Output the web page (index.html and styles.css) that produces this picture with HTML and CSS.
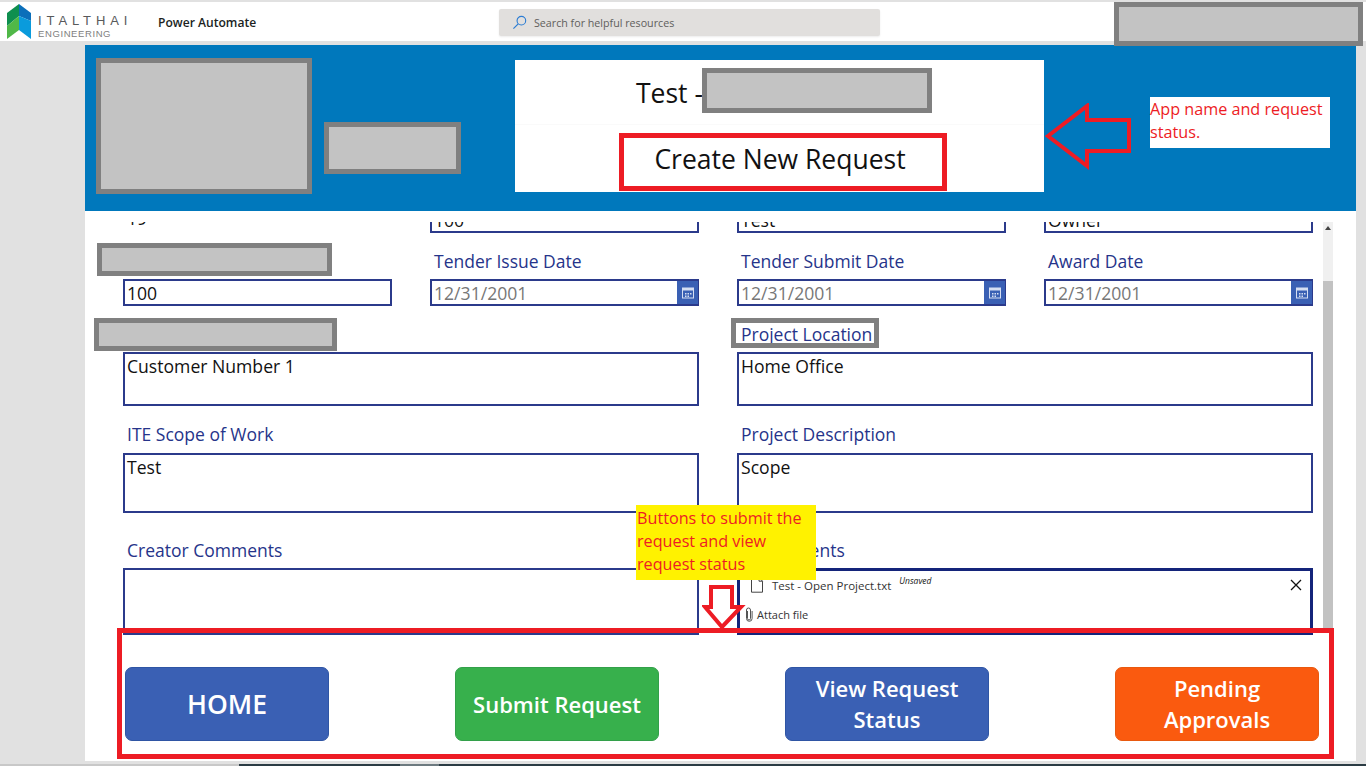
FILE: index.html
```html
<!DOCTYPE html>
<html lang="en">

<head>
    <meta charset="UTF-8">
    <title>Power Automate</title>
    <link rel="stylesheet" href="styles.css">
</head>

<body>
    <div class="top-bar">
        <div class="brand">
            <svg class="brand-mark" viewBox="0 0 24 36" width="24" height="36">
                <polygon points="12,0 0,9 0,22 12,12" fill="#0f8f4f"/>
                <polygon points="12,0 24,9 24,17 12,12" fill="#0b6fba"/>
                <polygon points="0,22 12,12 12,26 0,35" fill="#50b848"/>
                <polygon points="12,12 24,17 24,35 12,26" fill="#0a9bdc"/>
            </svg>
            <div class="brand-words">
                <div class="brand-name">ITALTHAI</div>
                <div class="brand-sub">ENGINEERING</div>
            </div>
        </div>
        <div class="product">Power Automate</div>
        <div class="search">
            <svg viewBox="0 0 16 16" width="15" height="15">
                <circle cx="10" cy="6" r="4.6" fill="none" stroke="#2b7cd3" stroke-width="1.2"/>
                <line x1="6.6" y1="9.4" x2="1.5" y2="14.5" stroke="#2b7cd3" stroke-width="1.3"/>
            </svg>
            <span>Search for helpful resources</span>
        </div>
    </div>

    <div class="canvas">
        <div class="app-header">
            <div class="app-title">
                <div class="app-name">Test -</div>
                <div class="app-status">Create New Request</div>
            </div>
        </div>

        <div class="form-area">
            <div class="form-scroll">
                <div class="form-inner">
                    <div class="form-row">
                        <div class="plain-value">19</div>
                        <div class="input">100</div>
                        <div class="input">Test</div>
                        <div class="input">Owner</div>
                    </div>

                    <div class="form-row row-dates">
                        <div class="field">
                            <div class="label"></div>
                            <div class="input">100</div>
                        </div>
                        <div class="field">
                            <div class="label">Tender Issue Date</div>
                            <div class="input date">
                                <span>12/31/2001</span>
                                <span class="date-btn">
                                    <svg viewBox="0 0 12 12" width="12" height="12">
                                        <rect x="0.5" y="1" width="11" height="10" fill="none" stroke="#d5def2"/>
                                        <rect x="0.5" y="1" width="11" height="2.5" fill="#d5def2"/>
                                        <path d="M3 6h1.5v1.5H3zM5.5 6H7v1.5H5.5zM8 6h1.5v1.5H8zM3 8.5h1.5V10H3zM5.5 8.5H7V10H5.5z" fill="#d5def2"/>
                                    </svg>
                                </span>
                            </div>
                        </div>
                        <div class="field">
                            <div class="label">Tender Submit Date</div>
                            <div class="input date">
                                <span>12/31/2001</span>
                                <span class="date-btn">
                                    <svg viewBox="0 0 12 12" width="12" height="12">
                                        <rect x="0.5" y="1" width="11" height="10" fill="none" stroke="#d5def2"/>
                                        <rect x="0.5" y="1" width="11" height="2.5" fill="#d5def2"/>
                                        <path d="M3 6h1.5v1.5H3zM5.5 6H7v1.5H5.5zM8 6h1.5v1.5H8zM3 8.5h1.5V10H3zM5.5 8.5H7V10H5.5z" fill="#d5def2"/>
                                    </svg>
                                </span>
                            </div>
                        </div>
                        <div class="field">
                            <div class="label">Award Date</div>
                            <div class="input date">
                                <span>12/31/2001</span>
                                <span class="date-btn">
                                    <svg viewBox="0 0 12 12" width="12" height="12">
                                        <rect x="0.5" y="1" width="11" height="10" fill="none" stroke="#d5def2"/>
                                        <rect x="0.5" y="1" width="11" height="2.5" fill="#d5def2"/>
                                        <path d="M3 6h1.5v1.5H3zM5.5 6H7v1.5H5.5zM8 6h1.5v1.5H8zM3 8.5h1.5V10H3zM5.5 8.5H7V10H5.5z" fill="#d5def2"/>
                                    </svg>
                                </span>
                            </div>
                        </div>
                    </div>

                    <div class="form-row row-two row-location">
                        <div class="field">
                            <div class="label"></div>
                            <div class="input area">Customer Number 1</div>
                        </div>
                        <div class="field">
                            <div class="label">Project Location</div>
                            <div class="input area">Home Office</div>
                        </div>
                    </div>

                    <div class="form-row row-two row-scope">
                        <div class="field">
                            <div class="label">ITE Scope of Work</div>
                            <div class="input area tall">Test</div>
                        </div>
                        <div class="field">
                            <div class="label">Project Description</div>
                            <div class="input area tall">Scope</div>
                        </div>
                    </div>

                    <div class="form-row row-two row-comments">
                        <div class="field">
                            <div class="label">Creator Comments</div>
                            <div class="input area taller"></div>
                        </div>
                        <div class="field">
                            <div class="label">Attachments</div>
                            <div class="attach-box">
                                <div class="attach-item">
                                    <svg viewBox="0 0 14 16" width="14" height="16">
                                        <path d="M1.5 .7h7.5l3.5 3.5v11h-11zM9 .7v3.5h3.5" fill="none" stroke="#444" stroke-width="1"/>
                                    </svg>
                                    <span class="attach-name">Test - Open Project.txt</span>
                                    <span class="attach-state">Unsaved</span>
                                    <svg class="attach-close" viewBox="0 0 12 12" width="12" height="12">
                                        <path d="M1 1l10 10M11 1L1 11" stroke="#111" stroke-width="1.3"/>
                                    </svg>
                                </div>
                                <div class="attach-add">
                                    <svg viewBox="0 0 8 15" width="8" height="15">
                                        <path d="M2.5 4v7.5a1.5 1.5 0 0 0 3 0V3a2 2 0 0 0-4 0v8.5a2.8 2.8 0 0 0 5.6 0V4" fill="none" stroke="#555" stroke-width="1"/>
                                    </svg>
                                    <span>Attach file</span>
                                </div>
                            </div>
                        </div>
                    </div>
                </div>
            </div>
            <div class="scrollbar">
                <div class="scroll-track"><span class="scroll-up"></span></div>
                <div class="scroll-thumb"></div>
            </div>
        </div>

        <div class="actions">
            <div class="btn btn-home">HOME</div>
            <div class="btn btn-green">Submit Request</div>
            <div class="btn">View Request Status</div>
            <div class="btn btn-orange">Pending Approvals</div>
        </div>
    </div>

    <div class="bottom-strip">
        <div class="strip-light"></div>
        <div class="strip-dark"><span class="strip-thumb"></span></div>
    </div>

    <!-- redactions and notes drawn on top of the screenshot -->
    <div class="mask mask-account"></div>
    <div class="mask mask-logo"></div>
    <div class="mask mask-logo-small"></div>
    <div class="mask mask-app"></div>
    <div class="mask mask-label-one"></div>
    <div class="mask mask-label-two"></div>
    <div class="mark-location"></div>

    <div class="red-box red-status"></div>
    <div class="red-box red-actions"></div>

    <div class="note note-app">App name and request status.</div>
    <div class="note note-buttons">Buttons to submit the request and view request status</div>

    <svg class="arrow arrow-left" viewBox="0 0 90 68" width="90" height="68">
        <polygon points="3,33 42,3 42,17 84,17 84,48 42,48 42,63" fill="none" stroke="#ed1c24" stroke-width="4"/>
    </svg>
    <svg class="arrow arrow-down" viewBox="0 0 44 46" width="44" height="46">
        <polygon points="9,2 30,2 30,22 39,22 20,42 3,22 9,22" fill="none" stroke="#ed1c24" stroke-width="4"/>
    </svg>
</body>

</html>
```

FILE: styles.css
```css
* {
    box-sizing: border-box;
}

html,
body {
    height: 766px;
    overflow: hidden;
}

body {
    margin: 0;
    position: relative;
    background-color: #e1e1e1;
    font-family: "Open Sans", "Noto Sans", sans-serif;
    color: #111;
}

/* top bar */
.top-bar {
    display: flex;
    align-items: center;
    height: 41px;
    border-top: 2px solid #e1e1e1;
    background-color: white;
}

.brand {
    display: flex;
    align-items: center;
    gap: 7px;
    width: 158px;
    padding-left: 7px;
}

.brand-mark {
    flex: none;
}

.brand-words {
    padding-top: 11px;
    font-family: "Liberation Sans", sans-serif;
}

.brand-name {
    font-size: 13px;
    line-height: 14px;
    letter-spacing: 4.9px;
    color: #58595b;
    white-space: nowrap;
}

.brand-sub {
    font-size: 9.5px;
    line-height: 12px;
    letter-spacing: .6px;
    color: #808080;
    white-space: nowrap;
}

.product {
    width: 341px;
    margin-top: 1px;
    font-size: 12.1px;
    font-weight: 600;
    color: #201f1e;
}

.search {
    display: flex;
    align-items: center;
    gap: 7px;
    width: 381px;
    height: 27px;
    margin-top: 2px;
    padding-left: 13px;
    border-radius: 2px;
    background-color: #e1dfdd;
    font-size: 10.7px;
    color: #605e5c;
    box-shadow: 0 1px 2px rgba(0, 0, 0, .08);
}

/* app canvas */
.canvas {
    width: 1271px;
    height: 716px;
    margin: 4px 0 0 85px;
    background-color: white;
}

.app-header {
    display: flex;
    height: 166px;
    padding: 15px 0 0 430px;
    background-color: #0078bc;
}

.app-title {
    width: 529px;
    height: 132px;
    background-color: white;
    font-size: 26.5px;
    text-align: center;
}

.app-name {
    height: 65px;
    padding: 14px 220px 0 0;
    line-height: 38px;
    border-bottom: 1px solid #fafafa;
}

.app-status {
    padding-top: 15px;
    padding-left: 1px;
    line-height: 38px;
}

/* form */
.form-area {
    display: flex;
    height: 426px;
    padding-top: 11px;
}

.form-scroll {
    width: 1238px;
    height: 415px;
    padding-left: 38px;
    overflow: hidden;
}

.form-inner {
    margin-top: -16px;
}

.form-row {
    display: grid;
    grid-template-columns: repeat(4, 269px);
    column-gap: 38px;
}

.row-two {
    grid-template-columns: repeat(2, 576px);
}

.row-dates,
.row-location,
.row-scope {
    margin-top: 14px;
}

.row-comments {
    margin-top: 23px;
}

.label {
    height: 32px;
    padding-left: 4px;
    font-size: 17.5px;
    line-height: 28px;
    color: #26348a;
}

.row-scope .label {
    height: 33px;
}

.plain-value {
    height: 27px;
    padding-left: 4px;
    font-size: 17.6px;
    line-height: 25px;
}

.input {
    height: 27px;
    padding-left: 2px;
    border: 2px solid #2b3a8b;
    background-color: white;
    font-size: 17.6px;
    line-height: 25px;
}

.date {
    display: flex;
    justify-content: space-between;
    color: #777;
}

.date-btn {
    display: flex;
    align-items: center;
    justify-content: center;
    width: 21px;
    margin-right: -1px;
    background-color: #3a60b4;
}

.area {
    height: 54px;
}

.tall {
    height: 60px;
}

.taller {
    height: 67px;
}

.attach-box {
    height: 67px;
    padding: 5px 8px 0 6px;
    border: 3px solid #14247a;
    font-size: 11.5px;
}

.attach-item {
    display: flex;
    align-items: center;
    height: 18px;
    padding-left: 4px;
}

.attach-name {
    margin-left: 8px;
    color: #333;
}

.attach-state {
    margin: -9px 0 0 8px;
    font-size: 8.5px;
    font-style: italic;
}

.attach-close {
    margin-left: auto;
}

.attach-add {
    display: flex;
    align-items: center;
    gap: 4px;
    height: 18px;
    margin-top: 11px;
    margin-left: -1px;
    font-size: 11px;
    color: #333;
}

/* scrollbar */
.scrollbar {
    display: flex;
    flex-direction: column;
    width: 10px;
    height: 408px;
}

.scroll-track {
    height: 59px;
    padding: 4px 0 0 2px;
    background-color: #f0f0f0;
}

.scroll-up {
    display: block;
    width: 0;
    height: 0;
    border-left: 3px solid transparent;
    border-right: 3px solid transparent;
    border-bottom: 4px solid #444;
}

.scroll-thumb {
    flex: 1;
    background-color: #c2c2c2;
}

/* buttons */
.actions {
    display: flex;
    gap: 126px;
    height: 124px;
    padding: 30px 0 0 40px;
}

.btn {
    display: flex;
    align-items: center;
    justify-content: center;
    width: 204px;
    height: 74px;
    padding: 0 24px;
    border: 1px solid #2f55a4;
    border-radius: 7px;
    background-color: #3a60b4;
    font-size: 22px;
    font-weight: 600;
    line-height: 31px;
    color: white;
    text-align: center;
}

.btn-home {
    padding-top: 1px;
    font-size: 26.5px;
}

.btn-green {
    padding: 0;
    border-color: #33a04a;
    background-color: #37b04c;
}

.btn-orange {
    border-color: #e8590f;
    background-color: #fa5a0f;
}

.bottom-strip {
    display: flex;
    height: 2px;
    margin-top: 3px;
}

.strip-light {
    width: 239px;
    background-color: #c8c8c8;
}

.strip-dark {
    flex: 1;
    padding-left: 161px;
    background-color: #2b3c44;
}

.strip-thumb {
    display: block;
    width: 39px;
    height: 2px;
    background-color: #6d7a80;
}

/* overlays */
.mask {
    position: absolute;
    border: 5px solid #808080;
    background-color: #c3c3c3;
}

.mask-account {
    left: 1114px;
    top: 2px;
    width: 249px;
    height: 44px;
}

.mask-logo {
    left: 96px;
    top: 58px;
    width: 216px;
    height: 136px;
}

.mask-logo-small {
    left: 324px;
    top: 122px;
    width: 137px;
    height: 52px;
}

.mask-app {
    left: 702px;
    top: 68px;
    width: 230px;
    height: 45px;
}

.mask-label-one {
    left: 97px;
    top: 243px;
    width: 235px;
    height: 33px;
}

.mask-label-two {
    left: 94px;
    top: 318px;
    width: 243px;
    height: 33px;
}

.mark-location {
    position: absolute;
    left: 731px;
    top: 318px;
    width: 148px;
    height: 30px;
    border: 5px solid #808080;
}

.red-box {
    position: absolute;
    border: 5px solid #ed1c24;
}

.red-status {
    left: 619px;
    top: 133px;
    width: 328px;
    height: 58px;
}

.red-actions {
    left: 117px;
    top: 628px;
    width: 1217px;
    height: 131px;
}

.note {
    position: absolute;
    font-size: 16.2px;
    line-height: 23px;
    color: #ed1c24;
}

.note-app {
    left: 1150px;
    top: 97px;
    width: 180px;
    height: 51px;
    padding-top: 1px;
    background-color: white;
}

.note-buttons {
    left: 636px;
    top: 505px;
    width: 180px;
    height: 75px;
    padding: 2px 0 0 1px;
    background-color: #fff200;
}

.arrow {
    position: absolute;
}

.arrow-left {
    left: 1045px;
    top: 103px;
}

.arrow-down {
    left: 702px;
    top: 585px;
}
```
